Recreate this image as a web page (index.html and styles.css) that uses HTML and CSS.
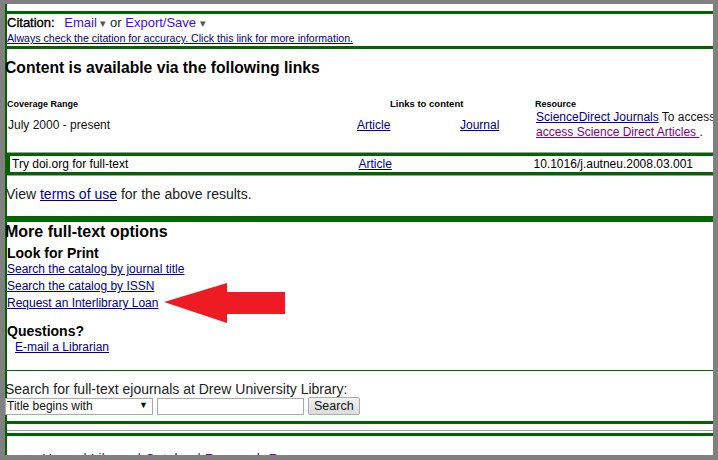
FILE: index.html
```html
<!DOCTYPE html>
<html lang="en">
<head>
    <meta charset="UTF-8">
    <title>SFX Services</title>
    <link rel="stylesheet" href="styles.css">
</head>
<body>

<div class="window">
    <div class="page">
        <div class="citation-bar">
            <div class="citation">
                <span class="label">Citation:</span>
                <a class="menu" href="#">Email</a> <span class="caret">&#9662;</span>
                or
                <a class="menu" href="#">Export/Save</a> <span class="caret">&#9662;</span>
            </div>
            <a class="note" href="#">Always check the citation for accuracy. Click this link for more information.</a>
        </div>

        <h2 class="title">Content is available via the following links</h2>

        <table class="links">
            <colgroup>
                <col class="w1">
                <col class="w2">
                <col class="w3">
                <col>
            </colgroup>
            <tr class="head">
                <th>Coverage Range</th>
                <th class="c2" colspan="2">Links to content</th>
                <th>Resource</th>
            </tr>
            <tr class="row">
                <td>July 2000 - present</td>
                <td><a href="#">Article</a></td>
                <td><a href="#">Journal</a></td>
                <td class="c4"><a href="#">ScienceDirect Journals</a> To access<br><a class="visited" href="#">access Science Direct Articles </a>.</td>
            </tr>
        </table>

        <div class="doi">
            <table class="doi-table">
                <colgroup>
                    <col class="d1">
                    <col class="d2">
                    <col>
                </colgroup>
                <tr>
                    <td class="first">Try doi.org for full-text</td>
                    <td><a href="#">Article</a></td>
                    <td>10.1016/j.autneu.2008.03.001</td>
                </tr>
            </table>
        </div>

        <p class="terms">View <a href="#">terms of use</a> for the above results.</p>

        <div class="more">
            <h3>More full-text options</h3>
            <h4>Look for Print</h4>
            <a class="opt" href="#">Search the catalog by journal title</a>
            <a class="opt" href="#">Search the catalog by ISSN</a>
            <a class="opt" href="#">Request an Interlibrary Loan</a>
            <h4 class="q">Questions?</h4>
            <a class="opt indent" href="#">E-mail a Librarian</a>

            <svg class="arrow" width="124" height="42" viewBox="0 0 124 42">
                <polygon points="0,19 63,0 63,9 121,9 121,31 63,31 63,40" fill="#ed1c24"/>
            </svg>
        </div>

        <form class="search">
            <div class="search-label">Search for full-text ejournals at Drew University Library:</div>
            <div class="search-row">
                <div class="mode-wrap">
                    <select class="mode">
                        <option>Title begins with</option>
                    </select>
                    <span class="mode-arrow">&#9660;</span>
                </div>
                <input class="query" type="text">
                <button class="go" type="button">Search</button>
            </div>
        </form>

        <div class="footer">
            <a href="#">Home</a> |
            <a href="#">Library</a> |
            <a href="#">Catalog</a> |
            <a href="#">Research Resources</a>
        </div>
    </div>
</div>

</body>
</html>
```

FILE: styles.css
```css
body {
    margin: 0;
    padding: 4px 5px 5px 5px;
    background-color: #808080;
    font-family: "Liberation Sans", Arial, sans-serif;
    color: #000;
}
a {
    color: #00008b;
}
.window {
    width: 708px;
    height: 451px;
    background-color: #fff;
    overflow: hidden;
}
.page {
    border-left: 2px solid #006400;
    padding-top: 7px;
    position: relative;
}
.citation-bar {
    border-top: 3px solid #006400;
    border-bottom: 3px solid #006400;
    padding: 0 0 2px 0;
}
.citation {
    font-size: 13px;
    line-height: 17px;
    color: #222;
}
.citation .label {
    color: #000;
    -webkit-text-stroke: 0.35px #000;
    margin-right: 6px;
}
.citation a.menu {
    color: #3b0cff;
    text-decoration: none;
}
.caret {
    color: #555;
    font-size: 11px;
}
.note {
    display: block;
    font-size: 10.6px;
    line-height: 12px;
    color: #00008b;
}
.title {
    font-size: 15.7px;
    margin: 9px 0 0 -2px;
    line-height: 20px;
}
table.links {
    border-collapse: collapse;
    width: 100%;
    table-layout: fixed;
}
.w1 {
    width: 349px;
}
.w2 {
    width: 103px;
}
.w3 {
    width: 76px;
}
.links th {
    font-size: 9px;
    font-weight: bold;
    text-align: left;
    padding: 21px 0 0 0;
    line-height: 10px;
}
.links th.c2 {
    padding-left: 34px;
    font-size: 9.5px;
}
.row td {
    font-size: 12px;
    line-height: 15px;
    vertical-align: middle;
    padding-bottom: 12px;
    color: #111;
    white-space: nowrap;
    overflow: hidden;
}
a.visited {
    color: #800080;
}
.doi {
    border-top: 1px solid #a0a0a0;
    border-bottom: 1px solid #a0a0a0;
}
.doi-table {
    border-collapse: collapse;
    table-layout: fixed;
    width: 100%;
    border: 3px solid #006400;
    border-right: none;
}
.doi-table .d1 {
    width: 350px;
}
.doi-table .d2 {
    width: 175px;
}
.doi-table td {
    font-size: 12px;
    line-height: 14px;
    padding: 1px 0;
    white-space: nowrap;
}
.doi-table td.first {
    padding-left: 2px;
}
.terms {
    font-size: 14px;
    margin: 9px 0 0 -1px;
    line-height: 18px;
    color: #222;
}
.more {
    position: relative;
    border-top: 6px solid #006400;
    margin-top: 13px;
    padding-bottom: 14px;
}
.more h3 {
    font-size: 16px;
    margin: 0 0 3px -2px;
    line-height: 20px;
}
.more h4 {
    font-size: 14px;
    margin: 0;
    line-height: 16px;
}
.more h4.q {
    margin-top: 11px;
}
.opt {
    display: block;
    font-size: 12px;
    line-height: 17px;
    color: #00008b;
}
.opt.indent {
    margin-left: 8px;
}
.arrow {
    position: absolute;
    left: 157px;
    top: 61px;
}
.search {
    border-top: 1px solid #006400;
    border-bottom: 3px solid #006400;
    padding: 11px 0 6px 0;
    margin: 0;
}
.search-label {
    font-size: 14px;
    line-height: 15px;
    color: #222;
    margin-left: -2px;
}
.search-row {
    display: flex;
    gap: 4px;
    align-items: center;
}
.mode-wrap {
    position: relative;
    margin-left: -2px;
}
.mode {
    display: block;
    width: 148px;
    height: 17px;
    font-family: inherit;
    font-size: 12px;
    color: #111;
    border: 1px solid #a9a9a9;
    background: #fff;
    padding: 0 0 0 1px;
    appearance: none;
    -webkit-appearance: none;
}
.mode-arrow {
    position: absolute;
    right: 5px;
    top: 2px;
    font-size: 9px;
    color: #111;
    pointer-events: none;
}
.query {
    width: 143px;
    height: 13px;
    border: 1px solid #a9a9a9;
    padding: 1px;
}
.go {
    font-family: inherit;
    font-size: 12.5px;
    height: 18px;
    padding: 0 5px;
    color: #111;
    border: 1px solid #acacac;
    border-radius: 2px;
    background: linear-gradient(#f2f2f2, #dcdcdc);
}
.footer {
    border-top: 1px solid #a0a0a0;
    margin-top: 6px;
    box-shadow: inset 0 2px 0 #fff, inset 0 5px 0 #006400;
    padding: 20px 0 0 35px;
    font-size: 14px;
    color: #800080;
}
.footer a {
    color: #800080;
    text-decoration: none;
}
```
